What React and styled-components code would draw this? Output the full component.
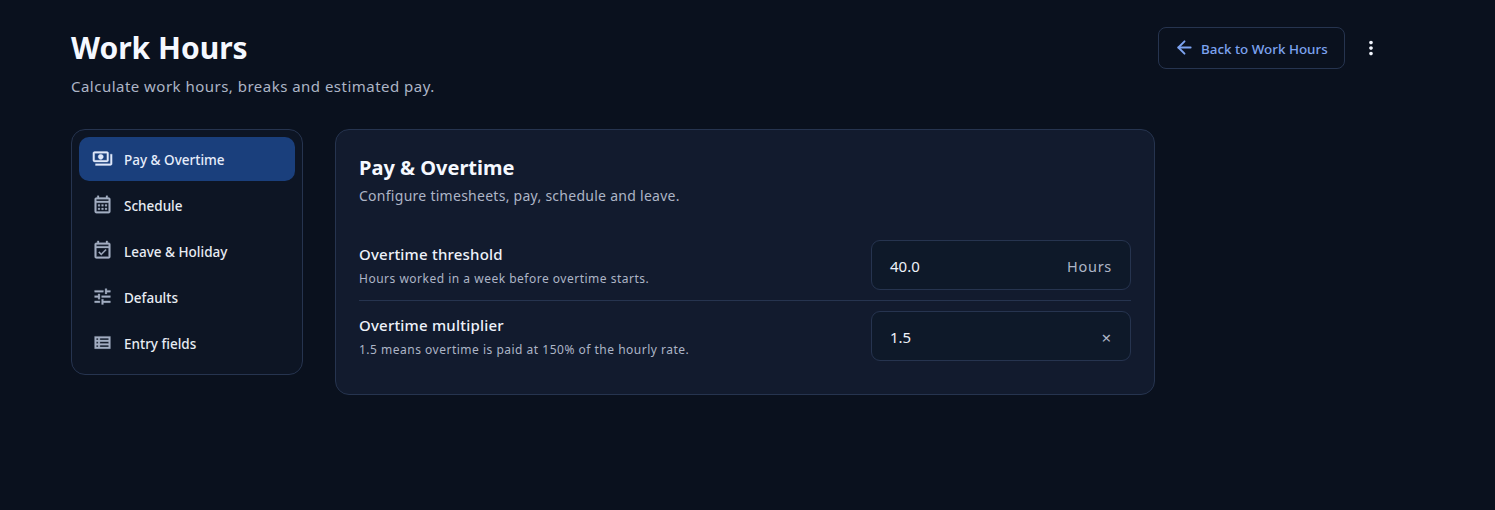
import React from "react";
import styled, { createGlobalStyle } from "styled-components";
import { ArrowLeft } from "lucide-react";
import {
  MdMoreVert,
  MdOutlineCalendarMonth,
  MdOutlineEventAvailable,
  MdOutlinePayments,
  MdOutlineTune,
  MdOutlineViewList,
} from "react-icons/md";

const Global = createGlobalStyle`
  html, body {
    margin: 0;
    background: #0a111e;
  }
  body {
    font-family: "Noto Sans", "Open Sans", sans-serif;
    color: #f1f5fd;
  }
`;

const Page = styled.div`
  box-sizing: border-box;
  width: 1495px;
  height: 510px;
  padding: 27px 0 0 71px;
`;

const Header = styled.header`
  display: flex;
  justify-content: space-between;
  align-items: flex-start;
  width: 1312px;
  height: 102px;
`;

const Title = styled.h1`
  margin: 0;
  font-size: 30px;
  line-height: 42px;
  font-weight: 700;
  color: #f5f8ff;
`;

const Subtitle = styled.p`
  margin: 5px 0 0;
  font-size: 15px;
  line-height: 24px;
  letter-spacing: 0.48px;
  color: #adb5c6;
`;

const Actions = styled.div`
  display: flex;
  align-items: center;
  gap: 14px;
`;

const BackButton = styled.button`
  display: flex;
  align-items: center;
  gap: 8px;
  box-sizing: border-box;
  width: 187px;
  height: 42px;
  padding: 2px 16px 0;
  background: transparent;
  border: 1px solid #26344f;
  border-radius: 8px;
  color: #7da3f0;
  font: 500 13.4px "Noto Sans", sans-serif;
  white-space: nowrap;
  svg {
    flex: none;
    margin: -3px -1.5px 0;
  }
`;

const IconButton = styled.button`
  display: flex;
  align-items: center;
  justify-content: center;
  width: 24px;
  height: 24px;
  padding: 0;
  background: none;
  border: 0;
  color: #f1f5fd;
`;

const Body = styled.div`
  display: flex;
  align-items: flex-start;
  gap: 32px;
`;

const Nav = styled.nav`
  display: flex;
  flex-direction: column;
  gap: 2px;
  box-sizing: border-box;
  width: 232px;
  padding: 7px 7px 9px;
  background: #0d1524;
  border: 1px solid #26344f;
  border-radius: 14px;
`;

const NavItem = styled.div`
  display: flex;
  align-items: center;
  gap: 11px;
  height: 44px;
  padding: 0 13px;
  border-radius: 10px;
  background: ${(p) => (p.$active ? "#1a3f7c" : "transparent")};
  color: ${(p) => (p.$active ? "#e6edfb" : "#e8ecf3")};
  font-size: 13.5px;
  font-weight: 500;
  svg {
    flex: none;
    margin-top: -1px;
    color: ${(p) => (p.$active ? "#dfe8fa" : "#a3aec2")};
  }
  svg path:not([fill="none"]) {
    stroke: currentColor;
    stroke-width: 0.35px;
  }
`;

const NavLabel = styled.span`
  line-height: 18px;
  padding-top: 1px;
`;

const Panel = styled.section`
  box-sizing: border-box;
  width: 820px;
  height: 266px;
  padding: 24px 23px 0;
  background: #121b2e;
  border: 1px solid #26344f;
  border-radius: 14px;
`;

const PanelTitle = styled.h2`
  margin: 0;
  font-size: 20px;
  line-height: 28px;
  font-weight: 700;
  color: #f5f8ff;
`;

const PanelText = styled.p`
  margin: 3px 0 0;
  font-size: 14px;
  line-height: 22px;
  letter-spacing: 0.27px;
  color: #adb5c6;
`;

const Rows = styled.div`
  margin-top: 23px;
`;

const Row = styled.div`
  display: flex;
  justify-content: space-between;
  align-items: center;
  padding: 10px 0;
  border-bottom: 1px solid ${(p) => (p.$last ? "transparent" : "#26344f")};
`;

const RowText = styled.div`
  padding-top: 2px;
`;

const Label = styled.div`
  font-size: 15px;
  line-height: 20px;
  font-weight: 500;
  letter-spacing: 0.2px;
  color: #eef2fa;
`;

const Hint = styled.div`
  margin-top: 6px;
  font-size: 12px;
  line-height: 18px;
  letter-spacing: 0.5px;
  color: #adb5c6;
`;

const Field = styled.div`
  display: flex;
  justify-content: space-between;
  align-items: center;
  box-sizing: border-box;
  width: 260px;
  height: 50px;
  padding: 2px 18px 0;
  background: #0e1929;
  border: 1px solid #26344f;
  border-radius: 9px;
  font-size: 15px;
  color: #eef2fa;
`;

const Unit = styled.span`
  color: #adb5c6;
  font-size: ${(p) => (p.$symbol ? "17px" : "14.5px")};
  letter-spacing: 0.7px;
`;

const navItems = [
  { label: "Pay & Overtime", icon: MdOutlinePayments, active: true },
  { label: "Schedule", icon: MdOutlineCalendarMonth },
  { label: "Leave & Holiday", icon: MdOutlineEventAvailable },
  { label: "Defaults", icon: MdOutlineTune },
  { label: "Entry fields", icon: MdOutlineViewList },
];

const App = () => {
  return (
    <Page>
      <Global />
      <Header>
        <div>
          <Title>Work Hours</Title>
          <Subtitle>Calculate work hours, breaks and estimated pay.</Subtitle>
        </div>
        <Actions>
          <BackButton>
            <ArrowLeft size={21} strokeWidth={2.2} />
            Back to Work Hours
          </BackButton>
          <IconButton aria-label="More">
            <MdMoreVert size={22} />
          </IconButton>
        </Actions>
      </Header>
      <Body>
        <Nav>
          {navItems.map((item) => (
            <NavItem key={item.label} $active={item.active}>
              <item.icon size={21} />
              <NavLabel>{item.label}</NavLabel>
            </NavItem>
          ))}
        </Nav>
        <Panel>
          <PanelTitle>Pay &amp; Overtime</PanelTitle>
          <PanelText>Configure timesheets, pay, schedule and leave.</PanelText>
          <Rows>
            <Row>
              <RowText>
                <Label>Overtime threshold</Label>
                <Hint>Hours worked in a week before overtime starts.</Hint>
              </RowText>
              <Field>
                40.0
                <Unit>Hours</Unit>
              </Field>
            </Row>
            <Row $last>
              <RowText>
                <Label>Overtime multiplier</Label>
                <Hint>1.5 means overtime is paid at 150% of the hourly rate.</Hint>
              </RowText>
              <Field>
                1.5
                <Unit $symbol>×</Unit>
              </Field>
            </Row>
          </Rows>
        </Panel>
      </Body>
    </Page>
  );
};

export default App;
